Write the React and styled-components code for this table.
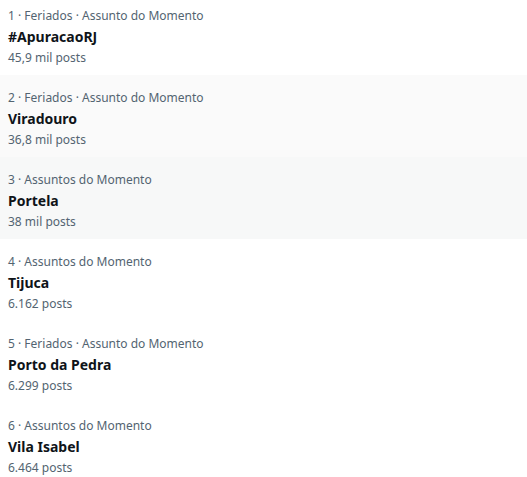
import React from 'react'
import styled, { createGlobalStyle } from 'styled-components'

const trends = [
    { rank: 1, context: 'Feriados · Assunto do Momento', title: '#ApuracaoRJ', posts: '45,9 mil posts' },
    { rank: 2, context: 'Feriados · Assunto do Momento', title: 'Viradouro', posts: '36,8 mil posts', shade: 'light' },
    { rank: 3, context: 'Assuntos do Momento', title: 'Portela', posts: '38 mil posts', shade: 'dark' },
    { rank: 4, context: 'Assuntos do Momento', title: 'Tijuca', posts: '6.162 posts' },
    { rank: 5, context: 'Feriados · Assunto do Momento', title: 'Porto da Pedra', posts: '6.299 posts' },
    { rank: 6, context: 'Assuntos do Momento', title: 'Vila Isabel', posts: '6.464 posts' },
]

function App() {
    return (
        <>
            <GlobalStyle />
            <TrendList>
                {trends.map(trend => (
                    <TrendRow key={trend.rank} $shade={trend.shade}>
                        <Context>{trend.rank} · {trend.context}</Context>
                        <Title>{trend.title}</Title>
                        <Posts>{trend.posts}</Posts>
                    </TrendRow>
                ))}
            </TrendList>
        </>
    )
}

export default App

const GlobalStyle = createGlobalStyle`
    body{
        margin: 0;
        background: #ffffff;
        font-family: "Noto Sans", "Open Sans", sans-serif;
    }
`

const shades = {
    light: '#fafafa',
    dark: '#f7f8f8',
}

const TrendList = styled.div`
    display: flex;
    flex-direction: column;
    margin-top: -7px;
`

const TrendRow = styled.div`
    display: flex;
    flex-direction: column;
    height: 82px;
    box-sizing: border-box;
    padding: 12px 8px 0;
    background: ${props => shades[props.$shade] || '#ffffff'};
`

const Context = styled.span`
    font-size: 12px;
    line-height: 21px;
    color: #536471;
`

const Title = styled.span`
    font-size: 14px;
    font-weight: 700;
    line-height: 21px;
    color: #0f1419;
`

const Posts = styled.span`
    font-size: 12px;
    line-height: 21px;
    color: #536471;
`
